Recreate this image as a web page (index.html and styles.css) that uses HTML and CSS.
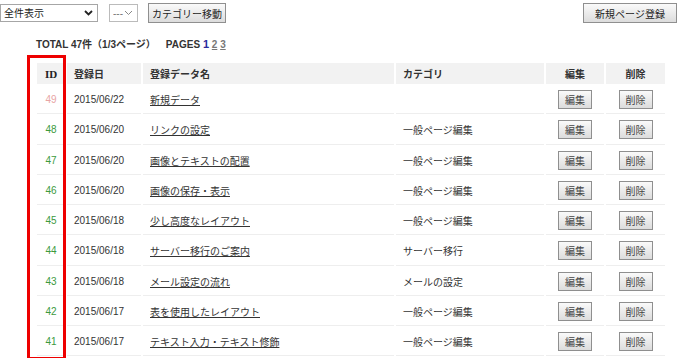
FILE: index.html
```html
<!DOCTYPE html>
<html lang="ja">
<head>
  <meta charset="UTF-8">
  <title>ページ一覧</title>
  <link rel="stylesheet" href="styles.css">
</head>
<body>
  <!-- Toolbar -->
  <div class="toolbar">
    <span class="select-wrap wide">
      <select class="select"><option>全件表示</option></select>
      <svg class="chev bold" width="9" height="6" viewBox="0 0 9 6"><path d="M1 1 L4.5 4.5 L8 1" fill="none" stroke="#222" stroke-width="1.8"/></svg>
    </span>
    <span class="select-wrap narrow">
      <select class="select light"><option>---</option></select>
      <svg class="chev" width="9" height="6" viewBox="0 0 9 6"><path d="M1 1 L4.5 4.5 L8 1" fill="none" stroke="#888" stroke-width="1"/></svg>
    </span>
    <button class="btn move">カテゴリー移動</button>
    <span class="spacer"></span>
    <button class="btn new">新規ページ登録</button>
  </div>

  <div class="summary">
    TOTAL 47件（1/3ページ）<span class="pages">PAGES <span class="current">1</span> <a href="#">2</a> <a href="#">3</a></span>
  </div>

  <div class="list">
    <table class="data">
      <colgroup>
        <col class="c-id"><col class="c-date"><col class="c-name"><col class="c-cat"><col class="c-edit"><col class="c-del">
      </colgroup>
      <thead>
        <tr>
          <th class="id">ID</th><th>登録日</th><th>登録データ名</th><th>カテゴリ</th><th class="center">編集</th><th class="center">削除</th>
        </tr>
      </thead>
      <tbody>
        <tr><td class="id draft">49</td><td>2015/06/22</td><td><a href="#">新規データ</a></td><td></td><td class="center"><button class="btn small">編集</button></td><td class="center"><button class="btn small">削除</button></td></tr>
        <tr><td class="id">48</td><td>2015/06/20</td><td><a href="#">リンクの設定</a></td><td>一般ページ編集</td><td class="center"><button class="btn small">編集</button></td><td class="center"><button class="btn small">削除</button></td></tr>
        <tr><td class="id">47</td><td>2015/06/20</td><td><a href="#">画像とテキストの配置</a></td><td>一般ページ編集</td><td class="center"><button class="btn small">編集</button></td><td class="center"><button class="btn small">削除</button></td></tr>
        <tr><td class="id">46</td><td>2015/06/20</td><td><a href="#">画像の保存・表示</a></td><td>一般ページ編集</td><td class="center"><button class="btn small">編集</button></td><td class="center"><button class="btn small">削除</button></td></tr>
        <tr><td class="id">45</td><td>2015/06/18</td><td><a href="#">少し高度なレイアウト</a></td><td>一般ページ編集</td><td class="center"><button class="btn small">編集</button></td><td class="center"><button class="btn small">削除</button></td></tr>
        <tr><td class="id">44</td><td>2015/06/18</td><td><a href="#">サーバー移行のご案内</a></td><td>サーバー移行</td><td class="center"><button class="btn small">編集</button></td><td class="center"><button class="btn small">削除</button></td></tr>
        <tr><td class="id">43</td><td>2015/06/18</td><td><a href="#">メール設定の流れ</a></td><td>メールの設定</td><td class="center"><button class="btn small">編集</button></td><td class="center"><button class="btn small">削除</button></td></tr>
        <tr><td class="id">42</td><td>2015/06/17</td><td><a href="#">表を使用したレイアウト</a></td><td>一般ページ編集</td><td class="center"><button class="btn small">編集</button></td><td class="center"><button class="btn small">削除</button></td></tr>
        <tr><td class="id">41</td><td>2015/06/17</td><td><a href="#">テキスト入力・テキスト修飾</a></td><td>一般ページ編集</td><td class="center"><button class="btn small">編集</button></td><td class="center"><button class="btn small">削除</button></td></tr>
      </tbody>
    </table>
    <!-- Annotation box around the ID column -->
    <div class="mark"></div>
  </div>
</body>
</html>
```

FILE: styles.css
```css
/* Global */
body {
  margin: 0;
  font-family: "Liberation Sans", "Noto Sans CJK JP", sans-serif;
  font-size: 10px;
  color: #333;
  background: #fff;
}

/* Toolbar */
.toolbar {
  display: flex;
  align-items: center;
  gap: 10px;
  height: 20px;
  padding: 3px 7px 0 0;
}
.spacer {
  flex: 1;
}
.select-wrap {
  position: relative;
  display: inline-block;
  height: 18px;
}
.select-wrap.wide { width: 98px; }
.select-wrap.narrow { width: 29px; margin-left: 1px; }
.select {
  appearance: none;
  -webkit-appearance: none;
  width: 100%;
  height: 18px;
  margin: 0;
  padding: 0 0 0 3px;
  border: 1px solid #a6a6a6;
  border-radius: 0;
  background: #fff;
  font: 10px "Liberation Sans", "Noto Sans CJK JP", sans-serif;
  color: #222;
}
.select.light {
  color: #777;
  border-color: #bbb;
}
.chev {
  position: absolute;
  right: 5px;
  top: 6px;
  pointer-events: none;
}

.btn {
  height: 20px;
  padding: 0;
  border: 1px solid #8f8f8f;
  border-radius: 0;
  background: linear-gradient(#fafafa, #dcdcdc);
  font: 10px "Liberation Sans", "Noto Sans CJK JP", sans-serif;
  color: #222;
  white-space: nowrap;
}
.btn.move {
  width: 78px;
}
.btn.new {
  width: 94px;
}
.btn.small {
  width: 34px;
  height: 19px;
  color: #444;
}

/* Summary line */
.summary {
  margin: 14px 0 0 36px;
  font-weight: bold;
  color: #333;
  line-height: 14px;
}
.pages {
  margin-left: 10px;
}
.pages .current {
  color: #2b2b9c;
  font-size: 11px;
}
.pages a {
  color: #777;
  font-size: 10px;
}

/* Table */
.list {
  position: relative;
  margin-top: 9px;
}
.data {
  margin-left: 35px;
  border-collapse: separate;
  border-spacing: 2px;
  table-layout: fixed;
  width: 632px;
}
.c-id { width: 28px; }
.c-date { width: 74px; }
.c-name { width: 251px; }
.c-cat { width: 148px; }
.c-edit { width: 58px; }
.c-del { width: 59px; }

.data th {
  height: 21px;
  padding: 0 0 0 7px;
  background: #f2f2f2;
  text-align: left;
  font-weight: bold;
  color: #333;
}
.data td {
  height: 27.25px;
  padding: 0 0 0 7px;
  border-bottom: 1px solid #eee;
  white-space: nowrap;
}
.data .center {
  text-align: center;
  padding: 0;
}
.data .id {
  text-align: center;
  padding: 0;
  color: #3c9a3c;
}
.data th.id {
  font-family: "Liberation Serif", serif;
  font-size: 11px;
  color: #222;
}
.data td.draft {
  color: #e8a4a4;
}
.data a {
  color: #333;
}

/* Red annotation frame */
.mark {
  position: absolute;
  left: 27px;
  top: -6px;
  width: 33px;
  height: 299px;
  border: 3px solid #e00;
}
```
